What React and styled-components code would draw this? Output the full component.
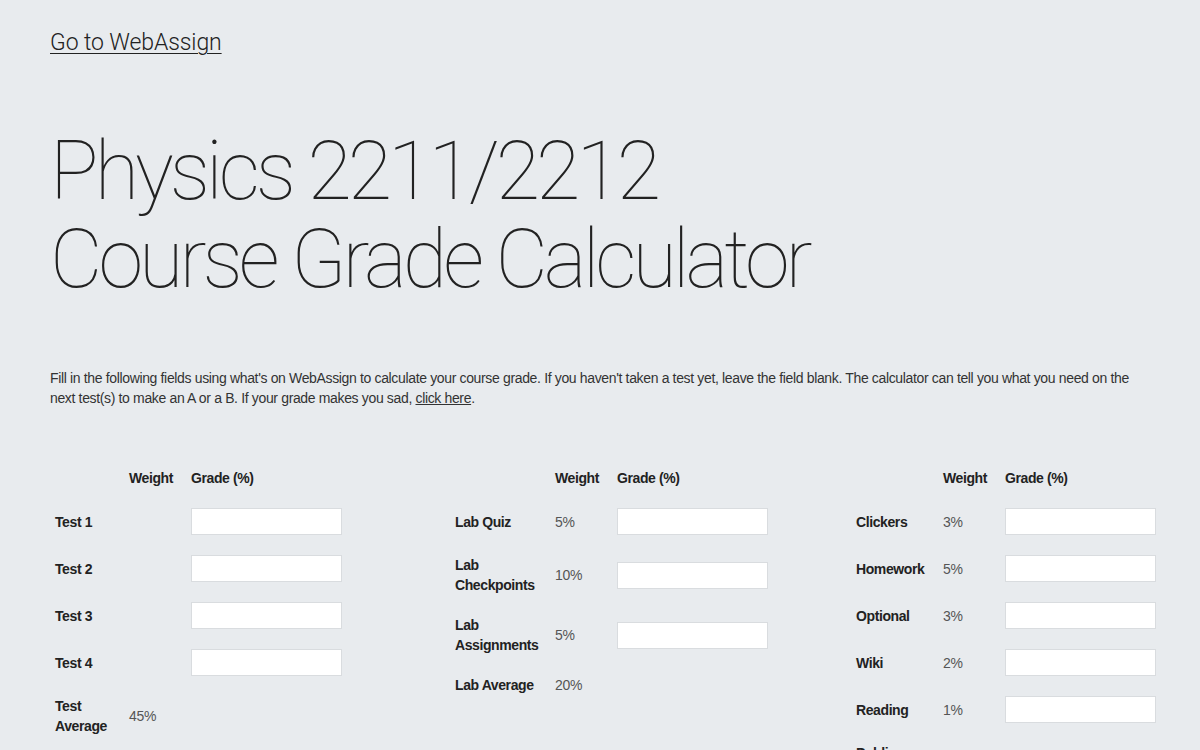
import React from "react";
import styled, { createGlobalStyle } from "styled-components";

const GlobalStyle = createGlobalStyle`
  html, body {
    margin: 0;
    padding: 0;
    background: #e8ebee;
    overflow: hidden;
  }
  body {
    font-family: "Liberation Sans", Helvetica, Arial, sans-serif;
    color: #222;
  }
  * { box-sizing: border-box; }
`;

const Page = styled.div`
  padding: 28px 50px 0;
`;

const TopLink = styled.a`
  display: inline-block;
  font-family: "Roboto", "Liberation Sans", sans-serif;
  font-weight: 300;
  font-size: 23px;
  line-height: 30px;
  letter-spacing: -0.1px;
  color: #222;
  text-decoration: underline;
  text-decoration-thickness: 1px;
  text-underline-offset: 3px;
`;

const Title = styled.h1`
  margin: 70px 0 0;
  font-family: "Roboto", "Liberation Sans", sans-serif;
  font-weight: 100;
  font-size: 81px;
  line-height: 88px;
  letter-spacing: -4px;
  color: #222;
`;

const Intro = styled.p`
  margin: 64px 0 0;
  font-size: 14px;
  line-height: 20px;
  letter-spacing: -0.35px;
  color: #333;
  max-width: 1100px;
`;

const InlineLink = styled.a`
  color: #333;
  text-decoration: underline;
`;

const Columns = styled.div`
  display: grid;
  grid-template-columns: 400px 400px 300px;
  margin-top: 50px;
`;

const GradeTable = styled.table`
  border-collapse: collapse;
  table-layout: fixed;
  width: ${(p) => p.$width}px;
  margin-left: ${(p) => p.$offset || 0}px;
`;

const HeadCell = styled.th`
  padding: 10px 5px;
  font-size: 14px;
  line-height: 20px;
  letter-spacing: -0.4px;
  font-weight: bold;
  text-align: left;
  color: #222;
  width: ${(p) => (p.$w ? `${p.$w}px` : "auto")};
`;

const LabelCell = styled.td`
  padding: 10px 5px;
  font-size: 14px;
  line-height: 20px;
  letter-spacing: -0.4px;
  font-weight: bold;
  color: #222;
  vertical-align: middle;
`;

const WeightCell = styled.td`
  padding: 10px 5px;
  font-size: 14px;
  line-height: 20px;
  letter-spacing: -0.3px;
  color: #555;
  vertical-align: middle;
`;

const GradeCell = styled.td`
  padding: 10px 5px;
  vertical-align: middle;
`;

const GradeInput = styled.input`
  display: block;
  width: 151px;
  height: 27px;
  margin: 0;
  padding: 0 6px;
  border: 1px solid #d9dcdf;
  background: #fff;
  font-family: inherit;
  font-size: 14px;
  outline: none;
`;

const tables = [
  {
    widths: [74, 62, 161],
    offset: 0,
    rows: [
      { label: "Test 1", input: true },
      { label: "Test 2", input: true },
      { label: "Test 3", input: true },
      { label: "Test 4", input: true },
      { label: ["Test", "Average"], weight: "45%" },
    ],
  },
  {
    widths: [100, 62, 161],
    offset: 0,
    rows: [
      { label: "Lab Quiz", weight: "5%", input: true },
      { label: ["Lab", "Checkpoints"], weight: "10%", input: true },
      { label: ["Lab", "Assignments"], weight: "5%", input: true },
      { label: "Lab Average", weight: "20%" },
    ],
  },
  {
    widths: [87, 62, 161],
    offset: 1,
    rows: [
      { label: "Clickers", weight: "3%", input: true },
      { label: "Homework", weight: "5%", input: true },
      { label: "Optional", weight: "3%", input: true },
      { label: "Wiki", weight: "2%", input: true },
      { label: "Reading", weight: "1%", input: true },
      { label: ["Public", "Speaking"], weight: "2%", input: true },
    ],
  },
];

function Label({ label }) {
  if (Array.isArray(label)) {
    return (
      <>
        {label[0]}
        <br />
        {label[1]}
      </>
    );
  }
  return label;
}

export default function App() {
  return (
    <>
      <GlobalStyle />
      <Page>
        <TopLink href="#">Go to WebAssign</TopLink>
        <Title>
          Physics 2211/2212
          <br />
          Course Grade Calculator
        </Title>
        <Intro>
          Fill in the following fields using what's on WebAssign to calculate
          your course grade. If you haven't taken a test yet, leave the field
          blank. The calculator can tell you what you need on the next test(s)
          to make an A or a B. If your grade makes you sad,{" "}
          <InlineLink href="#">click here</InlineLink>.
        </Intro>
        <Columns>
          {tables.map((t, i) => (
            <div key={i}>
              <GradeTable
                $width={t.widths.reduce((a, b) => a + b, 0)}
                $offset={t.offset}
              >
                <thead>
                  <tr>
                    <HeadCell $w={t.widths[0]} />
                    <HeadCell $w={t.widths[1]}>Weight</HeadCell>
                    <HeadCell $w={t.widths[2]}>Grade (%)</HeadCell>
                  </tr>
                </thead>
                <tbody>
                  {t.rows.map((r, j) => (
                    <tr key={j}>
                      <LabelCell>
                        <Label label={r.label} />
                      </LabelCell>
                      <WeightCell>{r.weight || ""}</WeightCell>
                      <GradeCell>{r.input ? <GradeInput type="text" /> : null}</GradeCell>
                    </tr>
                  ))}
                </tbody>
              </GradeTable>
            </div>
          ))}
        </Columns>
      </Page>
    </>
  );
}
